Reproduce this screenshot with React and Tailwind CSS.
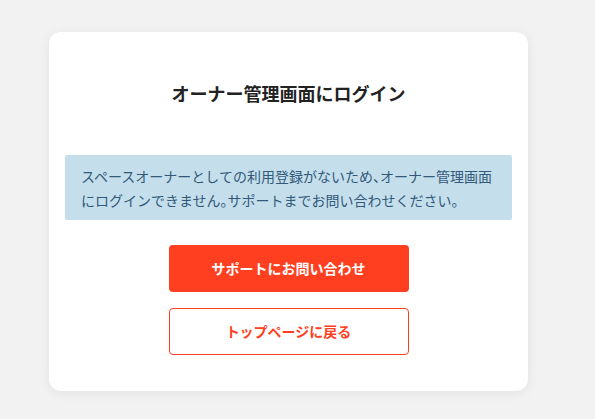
const P = ({ children }) => (
  <span className="[font-feature-settings:'halt']">{children}</span>
);

export default function App() {
  return (
    <div
      className="min-h-[419px] w-full bg-[#f2f2f2] pt-[32px]"
      style={{ fontFamily: '"Noto Sans CJK JP", "Noto Sans", sans-serif' }}
    >
      <div className="ml-[49px] w-[479px] rounded-[12px] bg-white px-4 pt-[48px] pb-[36px] shadow-[0_2px_12px_rgba(0,0,0,0.07)]">
        <h1 className="text-center text-[18px] font-bold leading-[27px] text-[#222]">
          オーナー管理画面にログイン
        </h1>

        <div className="mt-[48px] rounded-[2px] bg-[#c4dfeb] pt-[9px] pb-2 pl-4 pr-2 text-[14px] leading-6 text-[#33597a]">
          スペースオーナーとしての利用登録がないため<P>、</P>オーナー管理画面にログインできません<P>。</P>サポートまでお問い合わせください<P>。</P>
        </div>

        <div className="mt-[25px] flex flex-col items-center gap-4">
          <button className="flex h-[47px] w-[240px] items-center justify-center rounded-[4px] bg-[#ff3f1f] text-[14px] font-bold text-white">
            サポートにお問い合わせ
          </button>
          <button className="flex h-[47px] w-[240px] items-center justify-center rounded-[4px] border border-[#ff3f1f] bg-white text-[14px] font-bold text-[#ff3f1f]">
            トップページに戻る
          </button>
        </div>
      </div>
    </div>
  );
}
